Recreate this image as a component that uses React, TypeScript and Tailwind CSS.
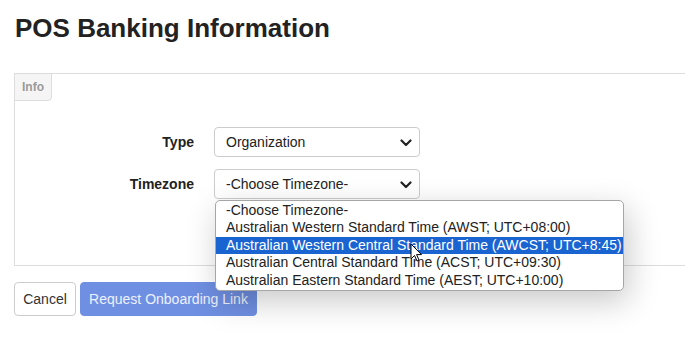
import React from "react";

const Chevron = () => (
  <svg width="12" height="8" viewBox="0 0 12 8" className="absolute right-[7px] top-[11px]">
    <path d="M1.5 1.5 L6 6 L10.5 1.5" fill="none" stroke="#222" strokeWidth="2.2" strokeLinecap="round" strokeLinejoin="round" />
  </svg>
);

const FakeSelect = ({ value }: { value: string }) => (
  <div className="relative h-[30px] w-[206px] rounded-[4px] border border-[#cccccc] bg-white pl-[11px] text-[14px] leading-[28px] text-[#222]">
    {value}
    <Chevron />
  </div>
);

const options = [
  "-Choose Timezone-",
  "Australian Western Standard Time (AWST; UTC+08:00)",
  "Australian Western Central Standard Time (AWCST; UTC+8:45)",
  "Australian Central Standard Time (ACST; UTC+09:30)",
  "Australian Eastern Standard Time (AEST; UTC+10:00)",
];

export default function App() {
  return (
    <div className="relative h-[358px] w-[685px] overflow-hidden bg-white font-['Liberation_Sans',Arial,sans-serif] text-[#333]">
      <h1 className="ml-[15px] pt-[15px] text-[26px] font-bold leading-[26px] text-[#222]">POS Banking Information</h1>
      <div className="ml-[14px] mt-[32px] h-[193px] w-[700px] border border-[#dddddd]">
        <div className="-ml-px -mt-px h-[28px] w-[38px] rounded-br-[4px] border border-[#dddddd] bg-[#f5f5f5] pl-[7px] text-[12px] font-bold leading-[26px] text-[#9a9a9a]">
          Info
        </div>
        <div className="mt-[26px] flex flex-col gap-[12px]">
          <div className="flex items-center">
            <div className="w-[179px] text-right text-[14px] font-bold text-[#222]">Type</div>
            <div className="ml-[20px]"><FakeSelect value="Organization" /></div>
          </div>
          <div className="flex items-center">
            <div className="w-[179px] text-right text-[14px] font-bold text-[#222]">Timezone</div>
            <div className="relative ml-[20px]">
              <FakeSelect value="-Choose Timezone-" />
              <div className="absolute left-px top-[31px] z-10 w-[409px] rounded-[5px] border border-[#a6a6a6] bg-white py-px shadow-[4px_10px_32px_rgba(0,0,0,0.22)]">
                {options.map((o, i) => (
                  <div
                    key={o}
                    className={
                      i === 2
                        ? "h-[17.4px] whitespace-nowrap bg-[#1a64d2] pl-[10px] text-[14px] leading-[17px] text-white"
                        : "h-[17.4px] whitespace-nowrap pl-[10px] text-[14px] leading-[17px] text-[#222]"
                    }
                  >
                    {o}
                  </div>
                ))}
              </div>
            </div>
          </div>
        </div>
      </div>
      <div className="ml-[14px] mt-[16px] flex gap-[4px]">
        <div className="h-[34px] w-[62px] rounded-[4px] border border-[#cccccc] bg-white text-center text-[14px] leading-[32px] text-[#333]">Cancel</div>
        <div className="h-[34px] w-[177px] rounded-[4px] border border-[#6f8fe2] bg-[#6f8fe2] text-center text-[14px] leading-[32px] text-[#eef2ff]">Request Onboarding Link</div>
      </div>
      <svg className="absolute left-[410px] top-[243px] z-20" width="13" height="20" viewBox="0 0 13 20">
        <path d="M1 1 L1 16 L4.5 12.5 L7 18 L9 17 L6.6 11.6 L11.5 11.6 Z" fill="#fff" stroke="#000" strokeWidth="1" strokeLinejoin="round" />
      </svg>
    </div>
  );
}
